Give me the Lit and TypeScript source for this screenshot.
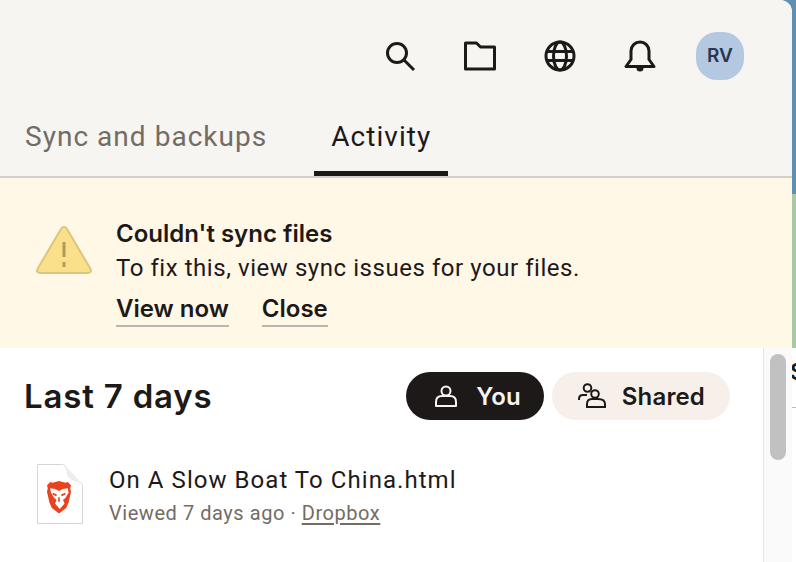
import { LitElement, html, css } from 'lit'
import { customElement } from 'lit/decorators.js'

@customElement('app-root')
export class AppRoot extends LitElement {
  static styles = css`
    :host {
      display: block;
      width: 796px;
      height: 562px;
      overflow: hidden;
      position: relative;
      background: linear-gradient(#5f8fb3 0 194px, #a9c9a4 194px 348px, #fff 348px);
      font-family: 'Roboto', 'Liberation Sans', sans-serif;
      color: #1e1919;
    }
    .peek {
      position: absolute;
      left: 790px;
      top: 358px;
      font-size: 24px;
      font-weight: 600;
      line-height: 28px;
    }
    .peek-line {
      position: absolute;
      left: 792px;
      top: 407px;
      width: 4px;
      height: 1px;
      background: #bbb;
    }
    .window {
      position: relative;
      width: 792px;
      height: 562px;
      border-top-right-radius: 12px;
      overflow: hidden;
      background: #fff;
      display: flex;
      flex-direction: column;
    }
    .top {
      background: #f7f5f2;
      height: 178px;
      flex: none;
      box-sizing: border-box;
      border-bottom: 2px solid #d4cfc8;
      display: flex;
      flex-direction: column;
    }
    .toolbar {
      height: 111px;
      flex: none;
      display: flex;
      align-items: center;
      justify-content: flex-end;
      padding-right: 48px;
      gap: 48px;
    }
    .toolbar svg { display: block; width: 32px; height: 32px; fill: none; stroke: #1e1919; stroke-width: 3; }
    .avatar {
      width: 48px;
      height: 48px;
      border-radius: 44%;
      background: #b4c8e1;
      color: #283750;
      font-family: 'Inter', sans-serif;
      font-size: 19px;
      font-weight: 600;
      display: flex;
      align-items: center;
      justify-content: center;
      margin-left: -8px;
    }
    .tabs { display: flex; height: 65px; padding-left: 9px; }
    .tab {
      box-sizing: border-box;
      padding: 9px 16px 0 16px;
      font-size: 28px;
      line-height: 34px;
      letter-spacing: 1.03px;
      color: #736c64;
      margin-right: 31px;
    }
    .tab.active {
      color: #1e1919;
      width: 134px;
      text-align: center;
      padding-left: 0;
      padding-right: 0;
      border-bottom: 5px solid #1e1919;
      margin-right: 0;
    }
    .banner {
      background: #fff8e7;
      height: 170px;
      flex: none;
      display: flex;
      padding-left: 35px;
      gap: 23px;
      box-sizing: border-box;
    }
    .banner svg { width: 58px; height: 54px; margin-top: 46px; flex: none; }
    .msg { padding-top: 39px; font-size: 24px; line-height: 34px; letter-spacing: 0.55px; }
    .msg b {
      font-family: 'Inter', sans-serif;
      font-weight: 600;
      letter-spacing: 0;
      display: block;
    }
    .actions { display: flex; gap: 33px; margin-top: 8px; }
    .actions a {
      font-family: 'Inter', sans-serif;
      font-weight: 600;
      letter-spacing: 0;
      border-bottom: 2px solid #bbb5ae;
      line-height: 32px;
    }
    .body { flex: 1; display: flex; min-height: 0; }
    .main { flex: 1; min-width: 0; }
    .head {
      display: flex;
      align-items: center;
      justify-content: space-between;
      padding: 24px 33px 0 24px;
    }
    h2 {
      margin: 0;
      font-family: 'Inter', sans-serif;
      font-size: 33px;
      font-weight: 600;
      letter-spacing: 0.8px;
    }
    .pills { display: flex; gap: 8px; }
    .pill {
      height: 48px;
      border-radius: 24px;
      display: flex;
      align-items: center;
      gap: 15px;
      padding: 0 25px;
      font-family: 'Inter', sans-serif;
      font-size: 24px;
      font-weight: 600;
      letter-spacing: 0.15px;
      background: #f7f0ea;
    }
    .pill.on { background: #1e1919; color: #f7f5f2; padding-right: 23px; }
    .pill svg { width: 30px; height: 30px; fill: none; stroke: currentColor; stroke-width: 2; }
    .file { display: flex; gap: 26px; padding: 44px 0 0 37px; }
    .file svg { width: 46px; height: 60px; flex: none; }
    .name { font-size: 24px; line-height: 32px; letter-spacing: 1.05px; }
    .sub { font-size: 20px; line-height: 34px; color: #736c64; letter-spacing: 0.55px; }
    .sub u { text-underline-offset: 3px; }
    .rail {
      width: 29px;
      flex: none;
      box-sizing: border-box;
      border-left: 1px solid #e4e4e4;
      background: #fafafa;
      padding: 6px 6px;
    }
    .thumb { width: 16px; height: 106px; border-radius: 8px; background: #c1c1c1; }
  `

  render() {
    return html`
      <div class="peek">S</div>
      <div class="peek-line"></div>
      <div class="window">
        <div class="top">
          <div class="toolbar">
            <svg viewBox="0 0 32 32"><circle cx="13" cy="13" r="9.500"/><path d="M20 20l10 10"/></svg>
            <svg viewBox="0 0 32 32"><path d="M1.500 3h11l4 4h14v22h-29z" stroke-linejoin="round"/></svg>
            <svg viewBox="0 0 32 32"><circle cx="16" cy="16" r="14"/><ellipse cx="16" cy="16" rx="6.500" ry="14"/><path d="M2 11.500h28M2 20.500h28"/></svg>
            <svg viewBox="0 0 32 32"><path d="M2 26.500h28l-5-7V11a9 9 0 0 0-18 0v8.500z" stroke-linejoin="round"/><path d="M12.500 28a3.500 3.500 0 0 0 7 0z" fill="#1e1919" stroke="none"/></svg>
            <div class="avatar">RV</div>
          </div>
          <div class="tabs">
            <div class="tab">Sync and backups</div>
            <div class="tab active">Activity</div>
          </div>
        </div>
        <div class="banner">
          <svg viewBox="0 0 58 54">
            <path d="M26 5q3-4 6 0L55 44q3 5-3 5H6q-6 0-3-5z" fill="#fbe08c" stroke="#dcc67c" stroke-width="2"/>
            <path d="M29 18v15M29 38v5" stroke="#b09a58" stroke-width="3"/>
          </svg>
          <div class="msg">
            <b>Couldn't sync files</b>
            <div>To fix this, view sync issues for your files.</div>
            <div class="actions"><a>View now</a><a>Close</a></div>
          </div>
        </div>
        <div class="body">
          <div class="main">
            <div class="head">
              <h2>Last 7 days</h2>
              <div class="pills">
                <div class="pill on"><svg viewBox="0 0 30 30"><circle cx="15" cy="10" r="4.500"/><path d="M5 25v-4q0-6 6-6h8q6 0 6 6v4z" stroke-linejoin="round"/></svg>You</div>
                <div class="pill"><svg viewBox="0 0 30 30"><circle cx="10.500" cy="7" r="3.800"/><circle cx="18" cy="13" r="3.800"/><path d="M10 26v-3q0-5 5-5h6q7 0 7 5v3zM2 19v-1q0-4 4-4h4"/></svg>Shared</div>
              </div>
            </div>
            <div class="file">
              <svg viewBox="0 0 46 60">
                <path d="M.5.500h24c4 0 5 3 6 7 1 5 3 8 8 9 4 1 7 2 7 6v37H.500z" fill="#fff" stroke="#d6d6d6"/>
                <path d="M29 3c2 6 3 13 15 16-6-8-11-12-15-16z" fill="#eeeeee"/>
                <g transform="translate(3.600 4.400) scale(.8 .9)">
                  <path d="M15 16l8-2 8 2 3-1 4 4-1 3 1 4-3 12-3 6-9 6-9-6-3-6-3-12 1-4-1-3 4-4z" fill="#e8421f"/>
                  <path d="M12 22l6 1 5 2 5-2 6-1 1 5-4 6-3 2 2 4-6 6-6-6 2-4-3-2-4-6z" fill="#fff"/>
                  <path d="M15 28l5 2M31 28l-5 2M23 32v5" stroke="#e8421f" stroke-width="2" fill="none"/>
                </g>
              </svg>
              <div>
                <div class="name">On A Slow Boat To China.html</div>
                <div class="sub">Viewed 7 days ago · <u>Dropbox</u></div>
              </div>
            </div>
          </div>
          <div class="rail"><div class="thumb"></div></div>
        </div>
      </div>
    `
  }
}
